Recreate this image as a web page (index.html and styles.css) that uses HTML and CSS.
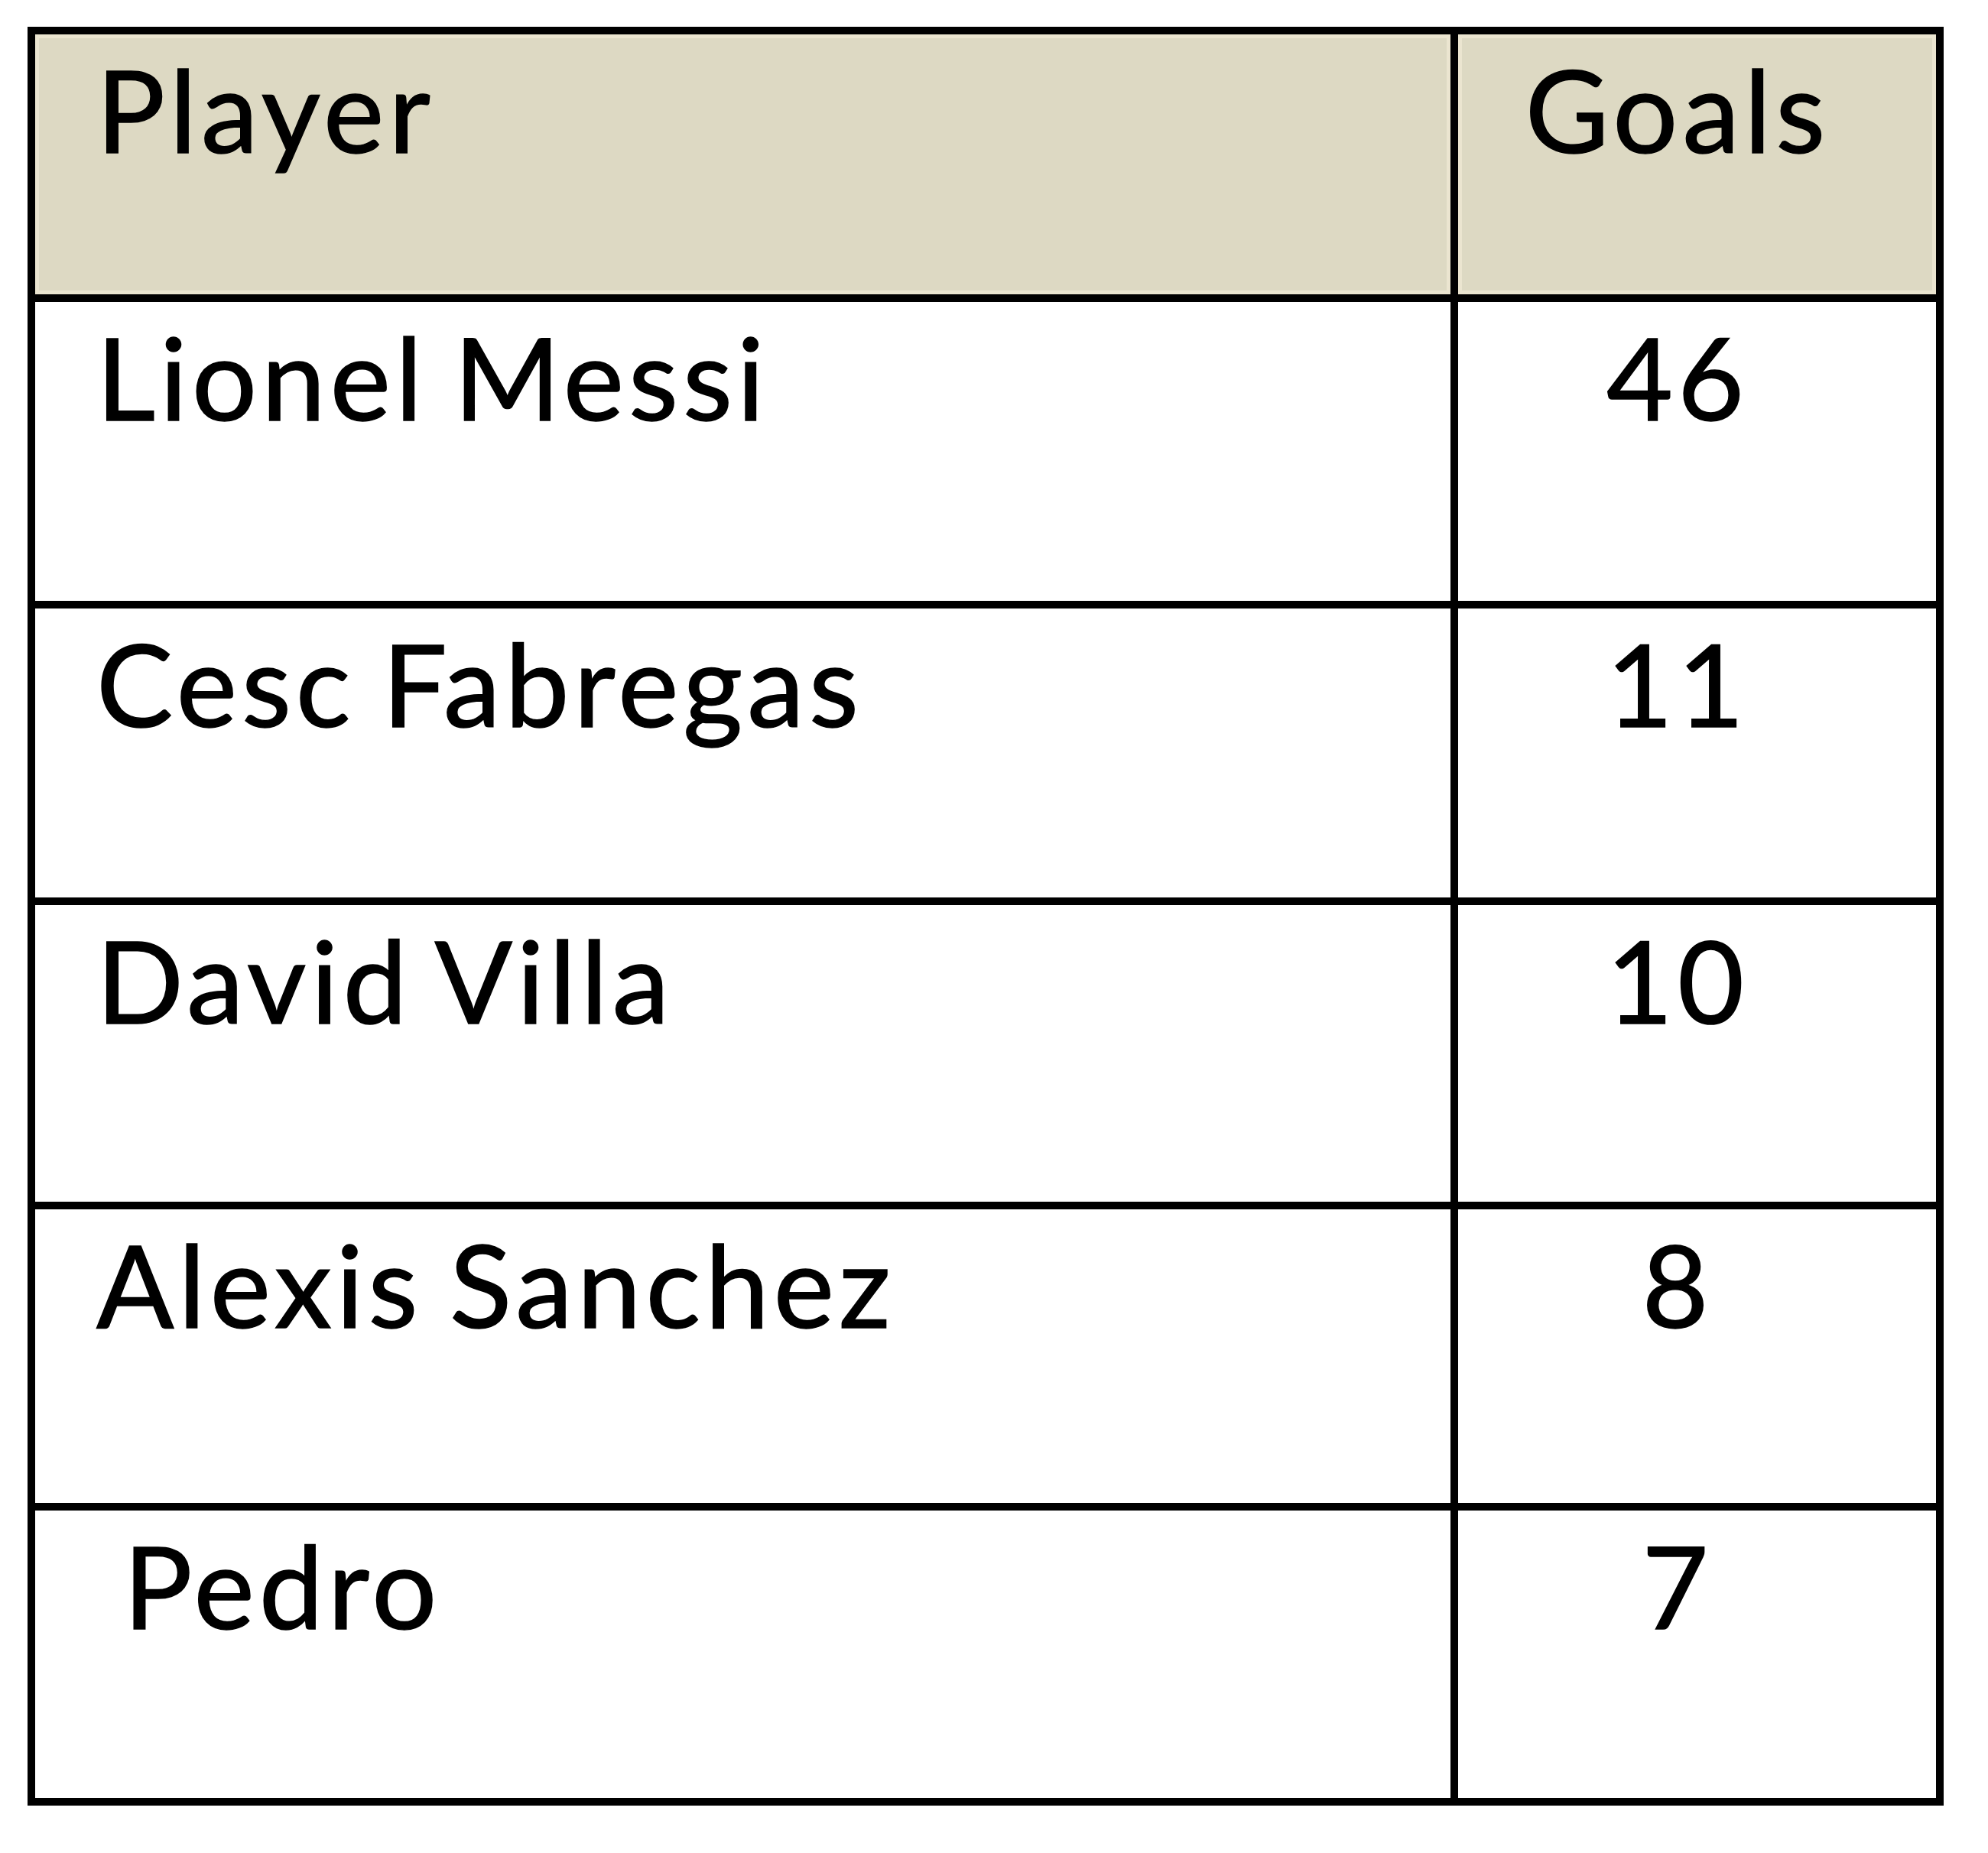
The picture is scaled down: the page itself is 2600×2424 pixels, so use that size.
FILE: index.html
```
<!DOCTYPE html>
<html lang="en">
<head>
<meta charset="utf-8">
<title>Top scorers</title>
<link rel="stylesheet" href="styles.css">
</head>
<body>
<div class="page">
  <table class="scorers">
    <thead>
      <tr class="row row-head">
        <th class="cell cell-player">Player</th>
        <th class="cell cell-goals">Goals</th>
      </tr>
    </thead>
    <tbody>
      <tr class="row row-1">
        <td class="cell cell-player">Lionel Messi</td>
        <td class="cell cell-goals">46</td>
      </tr>
      <tr class="row row-2">
        <td class="cell cell-player">Cesc Fabregas</td>
        <td class="cell cell-goals">11</td>
      </tr>
      <tr class="row row-3">
        <td class="cell cell-player">David Villa</td>
        <td class="cell cell-goals">10</td>
      </tr>
      <tr class="row row-4">
        <td class="cell cell-player">Alexis Sanchez</td>
        <td class="cell cell-goals">8</td>
      </tr>
      <tr class="row row-5">
        <td class="cell cell-player">&nbsp;Pedro</td>
        <td class="cell cell-goals">7</td>
      </tr>
    </tbody>
  </table>
</div>
</body>
</html>
```
FILE: styles.css
```
html, body {
  margin: 0;
  padding: 0;
  background: #ffffff;
}

.page {
  padding: 35px 0 0 36px;
}

.scorers {
  box-sizing: border-box;
  width: 2506px;
  table-layout: fixed;
  border-collapse: separate;
  border-spacing: 0;
  border: 10px solid #000000;
  font-family: Lato, "Liberation Sans", sans-serif;
  font-size: 150px;
  line-height: 1.2;
  letter-spacing: 6px;
  word-spacing: -9px;
  color: #000000;
  -webkit-text-stroke: 1.5px #000000;
}

.cell {
  box-sizing: border-box;
  vertical-align: top;
  font-weight: 400;
  padding: 7px 0 0 80px;
  white-space: pre;
  border-bottom: 10px solid #000000;
}

.cell-player {
  text-align: left;
  border-right: 10px solid #000000;
}

.cell-goals {
  width: 625px;
  text-align: center;
  padding-left: 84px;
  padding-right: 135px;
}

.row-head .cell {
  background: #ddd9c3;
  box-shadow: inset 0 0 0 5px #ebe5d0;
  height: 350px;
}

.row-1 .cell { height: 401px; }
.row-2 .cell { height: 388px; }
.row-3 .cell { height: 398px; }
.row-4 .cell { height: 394px; }
.row-5 .cell {
  height: 376px;
  border-bottom: none;
}
```
